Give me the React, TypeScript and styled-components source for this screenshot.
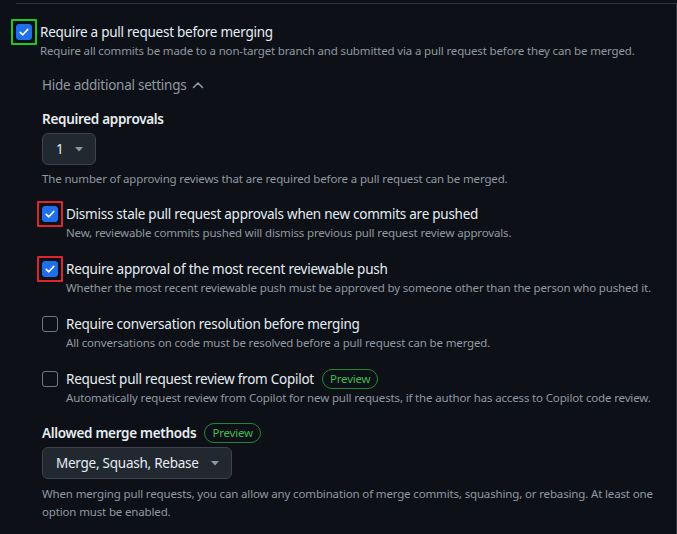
import React from "react";
import styled, { createGlobalStyle, css } from "styled-components";

const GlobalStyle = createGlobalStyle`
  html, body { margin: 0; padding: 0; background: #0d1117; }
  body {
    font-family: "Noto Sans", "Segoe UI", "Liberation Sans", sans-serif;
    color: #e6edf3;
    -webkit-font-smoothing: antialiased;
  }
  * { box-sizing: border-box; }
`;

const Frame = styled.div`
  position: relative;
  margin-top: 3px;
  height: 531px;
  border-right: 1px solid #30363d;
  padding: 19px 12px 0 16px;
  &::before {
    content: "";
    position: absolute;
    top: 0;
    left: 16px;
    right: 0;
    height: 1px;
    background: #30363d;
  }
`;

const OptionRow = styled.div`
  display: grid;
  grid-template-columns: 16px 1fr;
  column-gap: 8px;
`;

const Box = styled.span<{ $checked?: boolean; $ring?: string }>`
  position: relative;
  width: 16px;
  height: 16px;
  margin-top: 2px;
  border-radius: 3px;
  display: inline-flex;
  align-items: center;
  justify-content: center;
  ${(p) =>
    p.$checked
      ? css`
          background: #1f6feb;
          border: 1px solid #1f6feb;
        `
      : css`
          background: transparent;
          border: 1px solid #6e7681;
        `}
  ${(p) =>
    p.$ring &&
    css`
      &::after {
        content: "";
        position: absolute;
        inset: -6px;
        border: 2px solid ${p.$ring};
        border-radius: 1px;
      }
    `}
`;

const Title = styled.div`
  font-size: 13.5px;
  letter-spacing: -0.25px;
  line-height: 20px;
  color: #e6edf3;
  display: flex;
  align-items: center;
  gap: 8px;
`;

const Desc = styled.div`
  font-size: 11.5px;
  letter-spacing: -0.15px;
  line-height: 18px;
  color: #9198a1;
`;

const Sub = styled.div`
  padding-left: 26px;
`;

const Toggle = styled.div`
  margin-top: 15px;
  font-size: 13.5px;
  letter-spacing: -0.25px;
  line-height: 20px;
  color: #9198a1;
  display: flex;
  align-items: center;
  gap: 6px;
`;

const Label = styled.div<{ $mt: number }>`
  margin-top: ${(p) => p.$mt}px;
  font-size: 13.5px;
  letter-spacing: -0.3px;
  line-height: 20px;
  font-weight: 600;
  color: #e6edf3;
  display: flex;
  align-items: center;
  gap: 8px;
`;

const Badge = styled.span`
  display: inline-flex;
  align-items: center;
  height: 20px;
  padding: 0 7px;
  border: 1px solid #238636;
  border-radius: 999px;
  color: #3fb950;
  font-size: 11.5px;
  letter-spacing: -0.2px;
  font-weight: 400;
  line-height: 18px;
`;

const Select = styled.button<{ $mt: number }>`
  margin-top: ${(p) => p.$mt}px;
  height: 32px;
  display: inline-flex;
  align-items: center;
  gap: 12px;
  padding: 0 12px 0 13px;
  background: #212830;
  border: 1px solid #3d444d;
  border-radius: 6px;
  color: #e6edf3;
  font-family: inherit;
  font-size: 13.5px;
  letter-spacing: -0.25px;
`;

const Help = styled(Desc)<{ $mt: number }>`
  margin-top: ${(p) => p.$mt}px;
`;

const Options = styled.div`
  display: flex;
  flex-direction: column;
  gap: 17px;
  margin-top: 16px;
`;

const Check = () => (
  <svg width="12" height="12" viewBox="0 0 12 12" fill="none">
    <path d="M2.2 6.3 L4.8 8.8 L9.8 3.4" stroke="#fff" strokeWidth="1.6" strokeLinecap="round" strokeLinejoin="round" />
  </svg>
);

const Caret = () => (
  <svg width="8" height="5" viewBox="0 0 8 5">
    <path d="M0 0 H8 L4 4.5 Z" fill="#9198a1" />
  </svg>
);

const ChevronUp = () => (
  <svg width="12" height="8" viewBox="0 0 12 8" fill="none">
    <path d="M1.5 6.5 L6 2 L10.5 6.5" stroke="#9198a1" strokeWidth="1.6" strokeLinecap="round" strokeLinejoin="round" />
  </svg>
);

type Opt = { title: string; desc: string; checked?: boolean; ring?: string; preview?: boolean };

const options: Opt[] = [
  {
    title: "Dismiss stale pull request approvals when new commits are pushed",
    desc: "New, reviewable commits pushed will dismiss previous pull request review approvals.",
    checked: true,
    ring: "#e0242b",
  },
  {
    title: "Require approval of the most recent reviewable push",
    desc: "Whether the most recent reviewable push must be approved by someone other than the person who pushed it.",
    checked: true,
    ring: "#e0242b",
  },
  {
    title: "Require conversation resolution before merging",
    desc: "All conversations on code must be resolved before a pull request can be merged.",
  },
  {
    title: "Request pull request review from Copilot",
    desc: "Automatically request review from Copilot for new pull requests, if the author has access to Copilot code review.",
    preview: true,
  },
];

const Option = ({ o }: { o: Opt }) => (
  <OptionRow>
    <Box $checked={o.checked} $ring={o.ring}>{o.checked && <Check />}</Box>
    <div>
      <Title>
        {o.title}
        {o.preview && <Badge>Preview</Badge>}
      </Title>
      <Desc>{o.desc}</Desc>
    </div>
  </OptionRow>
);

export default function App() {
  return (
    <>
      <GlobalStyle />
      <Frame>
        <OptionRow>
          <Box $checked $ring="#1ec81e"><Check /></Box>
          <div>
            <Title>Require a pull request before merging</Title>
            <Desc>
              Require all commits be made to a non-target branch and submitted via a pull request before they can be merged.
            </Desc>
          </div>
        </OptionRow>
        <Sub>
          <Toggle>
            Hide additional settings <ChevronUp />
          </Toggle>
          <Label $mt={14}>Required approvals</Label>
          <Select $mt={4}>
            1 <Caret />
          </Select>
          <Help $mt={5}>
            The number of approving reviews that are required before a pull request can be merged.
          </Help>
          <Options>
            {options.map((o) => (
              <Option key={o.title} o={o} />
            ))}
          </Options>
          <Label $mt={16}>
            Allowed merge methods <Badge>Preview</Badge>
          </Label>
          <Select $mt={4}>
            Merge, Squash, Rebase <Caret />
          </Select>
          <Help $mt={6}>
            When merging pull requests, you can allow any combination of merge commits, squashing, or rebasing. At least one option must be enabled.
          </Help>
        </Sub>
      </Frame>
    </>
  );
}
